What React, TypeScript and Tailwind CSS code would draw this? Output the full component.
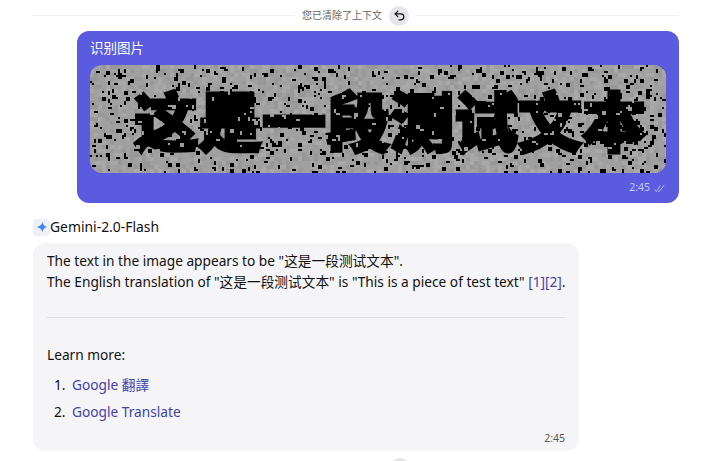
import { Undo2 } from 'lucide-react'

// seeded noise so the picture is the same on every run
const makeNoise = () => {
  let seed = 12345
  const rnd = () => {
    seed = (seed * 16807) % 2147483647
    return seed / 2147483647
  }
  const mottle: { x: number; y: number; light: boolean }[] = []
  for (let i = 0; i < 2400; i++) {
    mottle.push({ x: Math.floor(rnd() * 144) * 4, y: Math.floor(rnd() * 27) * 4, light: rnd() > 0.5 })
  }
  const black: { x: number; y: number; w: number; h: number }[] = []
  for (let i = 0; i < 850; i++) {
    black.push({
      x: Math.floor(rnd() * 288) * 2,
      y: Math.floor(rnd() * 54) * 2,
      w: 2 + Math.floor(rnd() * 2) * 2,
      h: 2 + Math.floor(rnd() * 2) * 2,
    })
  }
  // holes that break up the strokes of the big text
  const holes: { x: number; y: number; w: number; h: number }[] = []
  for (let i = 0; i < 170; i++) {
    holes.push({
      x: 40 + Math.floor(rnd() * 260) * 2,
      y: 26 + Math.floor(rnd() * 30) * 2,
      w: 2 + Math.floor(rnd() * 2) * 2,
      h: 2 + Math.floor(rnd() * 2) * 2,
    })
  }
  return { mottle, black, holes }
}

const noise = makeNoise()

const NoisyImage = () => (
  <svg viewBox="0 0 576 108" className="block h-[108px] w-[576px] rounded-[12px]" shapeRendering="crispEdges">
    <rect width="576" height="108" fill="#a0a0a0" />
    {noise.mottle.map((m, i) => (
      <rect key={i} x={m.x} y={m.y} width="4" height="4" fill={m.light ? '#a8a8a8' : '#989898'} />
    ))}
    <text
      x="300"
      y="81"
      textAnchor="middle"
      fontSize="64"
      fontWeight="900"
      fill="#000"
      stroke="#000"
      strokeWidth="3"
      fontFamily="'Noto Sans CJK SC', sans-serif"
    >
      这是一段测试文本
    </text>
    {noise.holes.map((s, i) => (
      <rect key={i} x={s.x} y={s.y} width={s.w} height={s.h} fill="#9c9c9c" />
    ))}
    {noise.black.map((s, i) => (
      <rect key={i} x={s.x} y={s.y} width={s.w} height={s.h} fill="#000" />
    ))}
  </svg>
)

const GeminiIcon = () => (
  <span className="flex h-[17px] w-[17px] items-center justify-center rounded-[4px] bg-[#eef0f6]">
    <svg viewBox="0 0 16 16" className="h-[12px] w-[12px]">
      <path d="M9 1 C9.2 5 10.6 7 15 8 C10.6 9 9.2 11 8.5 15 C7.8 11 5.4 9 1 8 C5.4 7 8 5 9 1 Z" fill="#3b82f6" />
    </svg>
  </span>
)

export default function App() {
  return (
    <div className="h-[461px] w-[720px] overflow-hidden bg-white font-['Noto_Sans','Noto_Sans_CJK_SC',sans-serif] text-[13.7px] text-[#111]">
      <div className="flex h-[31px] items-center gap-[7px] pl-[32px] pr-[41px]">
        <div className="h-[1px] flex-1 bg-[#f0f0f2]" />
        <span className="text-[10px] text-[#666]">您已清除了上下文</span>
        <span className="flex h-[20px] w-[20px] items-center justify-center rounded-full bg-[#e6e6ea]">
          <Undo2 size={13} strokeWidth={2.2} className="text-[#111]" />
        </span>
        <div className="h-[1px] flex-1 bg-[#f0f0f2]" />
      </div>

      <div className="ml-[77px] mr-[41px] flex h-[172px] flex-col rounded-[12px] bg-[#5b5bdf] px-[13px] pt-[7px]">
        <div className="h-[27px] text-[13.5px] leading-[20px] text-white">识别图片</div>
        <NoisyImage />
        <div className="flex flex-1 items-center justify-end gap-[4px] pr-[1px] text-[10.5px] text-[#c9c9f5]">
          <span>2:45</span>
          <svg viewBox="0 0 12 10" className="h-[9px] w-[11px]" fill="none" stroke="#c9c9f5" strokeWidth="0.9">
            <path d="M0.5 6 L2.5 8.5 L7 1.5" />
            <path d="M4.5 8 L5.5 8.5 L11 1.5" />
          </svg>
        </div>
      </div>

      <div className="ml-[33px] mt-[15px] flex h-[18px] items-center">
        <GeminiIcon />
        <span className="text-[13.9px]">Gemini-2.0-Flash</span>
      </div>

      <div className="ml-[33px] mt-[7px] h-[208px] w-[546px] rounded-[12px] bg-[#f5f5f8] px-[14px] pt-[7px]">
        <p className="leading-[21px]">The text in the image appears to be "这是一段测试文本".</p>
        <p className="whitespace-nowrap leading-[21px]">
          The English translation of "这是一段测试文本" is "This is a piece of test text"{' '}
          <span className="text-[#4343a8]">[1][2]</span>.
        </p>
        <div className="mt-[25px] h-[1px] bg-[#dedee2]" />
        <p className="mt-[26px] leading-[21px]">Learn more:</p>
        <ol className="mt-[10px] flex flex-col gap-[6px]">
          <li className="flex h-[21px] items-center">
            <span className="w-[25px] pl-[7px]">1.</span>
            <span className="text-[#4343a8]">Google 翻譯</span>
          </li>
          <li className="flex h-[21px] items-center">
            <span className="w-[25px] pl-[7px]">2.</span>
            <span className="text-[#4343a8]">Google Translate</span>
          </li>
        </ol>
        <div className="mt-[8px] text-right text-[10.5px] text-[#555]">2:45</div>
      </div>

      <div className="ml-[391px] mt-[7px] h-[20px] w-[18px] rounded-full bg-[#e6e6ea]" />
    </div>
  )
}
